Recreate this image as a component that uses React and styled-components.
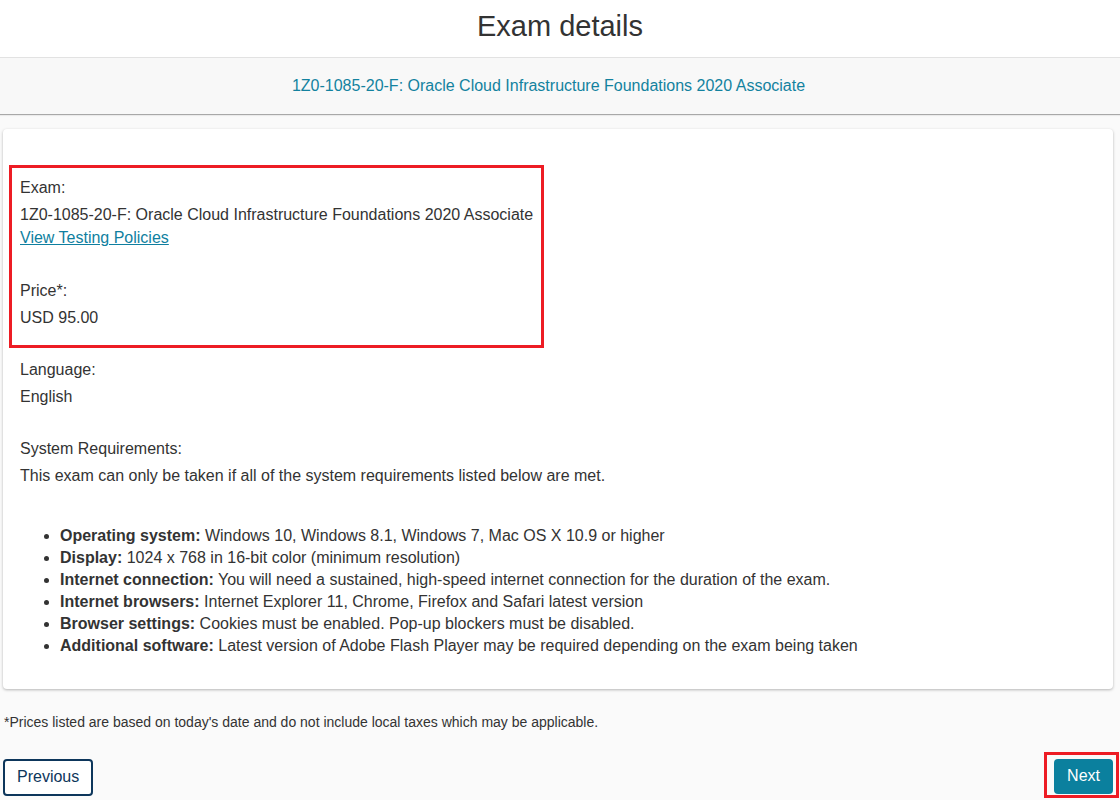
import React from "react";
import styled, { createGlobalStyle } from "styled-components";

const GlobalStyle = createGlobalStyle`
  html, body { margin: 0; padding: 0; }
  body {
    background: #fafafa;
    font-family: "Liberation Sans", Arial, sans-serif;
    color: #333;
  }
  * { box-sizing: border-box; }
`;

const Page = styled.div`
  display: flex;
  flex-direction: column;
  min-height: 800px;
`;

const Header = styled.header`
  height: 57px;
  background: #fff;
  display: flex;
  align-items: center;
  justify-content: center;
  padding-bottom: 5px;
`;

const Title = styled.h1`
  margin: 0;
  font-size: 29px;
  font-weight: 400;
  line-height: 1;
  color: #333;
`;

const Banner = styled.div`
  height: 58px;
  background: #f8f8f8;
  border-top: 1px solid #e2e2e2;
  border-bottom: 1px solid #a8a8a8;
  box-shadow: 0 1px 1px rgba(0, 0, 0, 0.06);
  display: flex;
  align-items: center;
  justify-content: center;
  padding-right: 23px;
  font-size: 16px;
  color: #13829f;
`;

const Card = styled.section`
  margin: 14px 7px 0 3px;
  background: #fff;
  border-radius: 4px;
  box-shadow: 0 1px 3px rgba(0, 0, 0, 0.28);
  padding: 36px 17px 32px 17px;
`;

const Highlight = styled.div`
  width: 535px;
  margin-left: -11px;
  border: 3px solid #ed1c24;
  padding: 9px 0 16px 8px;
  white-space: nowrap;
`;

const Field = styled.div`
  margin-bottom: ${(p) => (p.$last ? "0" : p.$gap || "31px")};
`;

const Label = styled.div`
  font-size: 16px;
  line-height: 22px;
  margin-bottom: 4px;
`;

const Value = styled.div`
  font-size: 16px;
  line-height: 23px;
`;

const Link = styled.a`
  color: #0f7fa0;
  text-decoration: underline;
  cursor: pointer;
`;

const Rest = styled.div`
  margin-top: 10.5px;
`;

const ReqList = styled.ul`
  margin: 38px 0 0 0;
  padding-left: 40px;
  font-size: 16px;
  line-height: 22px;
  list-style: disc;
`;

const Strong = styled.strong`
  font-weight: 700;
`;

const Note = styled.p`
  margin: 23.5px 0 0 0;
  padding-left: 4px;
  font-size: 14px;
  line-height: 20px;
  color: #333;
`;

const Actions = styled.div`
  margin-top: 19.5px;
  padding: 0 1px 0 3px;
  display: flex;
  justify-content: space-between;
  align-items: flex-start;
`;

const SecondaryButton = styled.button`
  margin-top: 7px;
  height: 37px;
  padding: 0 12px;
  background: #fff;
  border: 2px solid #0d365b;
  border-radius: 4px;
  font-family: inherit;
  font-size: 16px;
  color: #0d365b;
  cursor: pointer;
`;

const NextHighlight = styled.div`
  border: 3px solid #ed1c24;
  padding: 4px 3px 1px 7px;
`;

const PrimaryButton = styled.button`
  display: block;
  height: 35px;
  padding: 0 13px;
  background: #0b809e;
  border: none;
  border-radius: 4px;
  font-family: inherit;
  font-size: 16px;
  color: #fff;
  cursor: pointer;
`;

const examName = "1Z0-1085-20-F: Oracle Cloud Infrastructure Foundations 2020 Associate";

const requirements = [
  ["Operating system:", "Windows 10, Windows 8.1, Windows 7, Mac OS X 10.9 or higher"],
  ["Display:", "1024 x 768 in 16-bit color (minimum resolution)"],
  ["Internet connection:", "You will need a sustained, high-speed internet connection for the duration of the exam."],
  ["Internet browsers:", "Internet Explorer 11, Chrome, Firefox and Safari latest version"],
  ["Browser settings:", "Cookies must be enabled. Pop-up blockers must be disabled."],
  ["Additional software:", "Latest version of Adobe Flash Player may be required depending on the exam being taken"],
];

export default function App() {
  return (
    <>
      <GlobalStyle />
      <Page>
        <Header>
          <Title>Exam details</Title>
        </Header>
        <Banner>{examName}</Banner>
        <Card>
          <Highlight>
            <Field>
              <Label>Exam:</Label>
              <Value>{examName}</Value>
              <Value>
                <Link>View Testing Policies</Link>
              </Value>
            </Field>
            <Field $last>
              <Label>Price*:</Label>
              <Value>USD 95.00</Value>
            </Field>
          </Highlight>
          <Rest>
            <Field $gap="30px">
              <Label>Language:</Label>
              <Value>English</Value>
            </Field>
            <Field $last>
              <Label>System Requirements:</Label>
              <Value>This exam can only be taken if all of the system requirements listed below are met.</Value>
            </Field>
            <ReqList>
              {requirements.map(([k, v]) => (
                <li key={k}>
                  <Strong>{k}</Strong> {v}
                </li>
              ))}
            </ReqList>
          </Rest>
        </Card>
        <Note>*Prices listed are based on today's date and do not include local taxes which may be applicable.</Note>
        <Actions>
          <SecondaryButton>Previous</SecondaryButton>
          <NextHighlight>
            <PrimaryButton>Next</PrimaryButton>
          </NextHighlight>
        </Actions>
      </Page>
    </>
  );
}
